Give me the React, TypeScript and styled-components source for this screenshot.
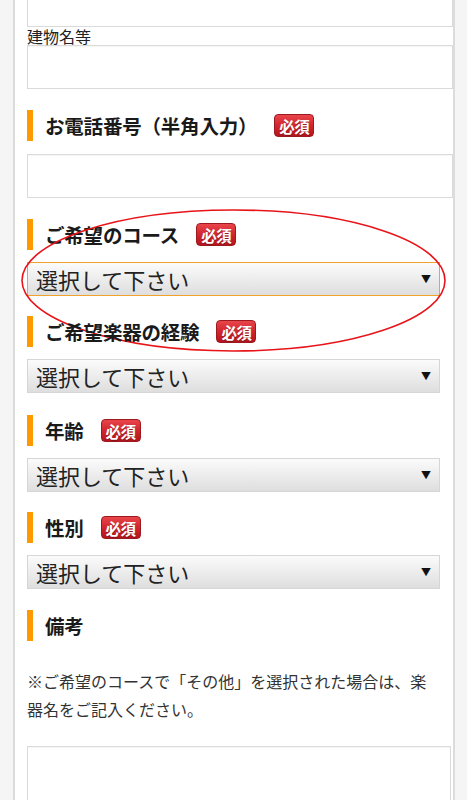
import styled, { createGlobalStyle } from 'styled-components';

const GlobalStyle = createGlobalStyle`
  html, body {
    margin: 0;
    padding: 0;
    background: #f5f5f5;
    font-family: "Noto Sans CJK JP", "Noto Sans", sans-serif;
    color: #222;
  }
  body {
    overflow: hidden;
  }
`;

const Panel = styled.div`
  box-sizing: border-box;
  width: 442px;
  min-height: 830px;
  margin-left: 13px;
  margin-top: -17px;
  padding: 0 0 0 12px;
  background: #fff;
  border-left: 2px solid #dcdcdc;
  border-right: 2px solid #dcdcdc;
`;

const TextInput = styled.div<{ $height?: number; $width?: number; $gap?: number }>`
  box-sizing: border-box;
  width: ${(p) => p.$width ?? 426}px;
  height: ${(p) => p.$height ?? 44}px;
  margin-top: ${(p) => p.$gap ?? 0}px;
  border: 1px solid #dadada;
  box-shadow: inset 0 1px 1px rgba(0, 0, 0, 0.04);
  background: #fff;
`;

const SubLabel = styled.div`
  font-size: 16px;
  line-height: 18px;
  color: #222;
`;

const Field = styled.div<{ $top?: number }>`
  position: relative;
  padding-top: ${(p) => p.$top ?? 21}px;
`;

const Heading = styled.div`
  display: flex;
  align-items: center;
  height: 31px;
  border-left: 6px solid #ff9900;
  padding-left: 12px;
  font-size: 19.5px;
  font-weight: 700;
  color: #1a1a1a;
  letter-spacing: -0.2px;
`;

const Badge = styled.span`
  display: inline-flex;
  align-items: center;
  justify-content: center;
  box-sizing: border-box;
  width: 40px;
  height: 23px;
  margin-left: 17px;
  border: 1px solid #9c1a1f;
  border-radius: 4px;
  background: linear-gradient(#e8454b 0%, #d0262d 50%, #b5141c 100%);
  color: #fff;
  font-size: 15.5px;
  font-weight: 700;
  letter-spacing: -0.5px;
  text-shadow: 0 1px 0 rgba(0, 0, 0, 0.3);
`;

const Select = styled.div<{ $focused?: boolean }>`
  box-sizing: border-box;
  display: flex;
  align-items: center;
  justify-content: space-between;
  width: 413px;
  height: 34px;
  margin-top: 12px;
  padding: 0 8px;
  border: 1px solid ${(p) => (p.$focused ? '#f0a22a' : '#d6d6d6')};
  background: linear-gradient(#fbfbfb, #dedede);
  font-size: 22px;
  color: #222;
`;

const Arrow = styled.span`
  font-size: 10px;
  color: #111;
  line-height: 1;
`;

const Note = styled.p`
  margin: 26px 0 0;
  padding-right: 12px;
  font-size: 16px;
  line-height: 28px;
  color: #333;
`;

const Circle = styled.svg`
  position: absolute;
  left: -6px;
  top: 11px;
  overflow: visible;
  pointer-events: none;
`;

const Required = () => <Badge>必須</Badge>;

const SelectBox = ({ focused }: { focused?: boolean }) => (
  <Select $focused={focused}>
    <span>選択して下さい</span>
    <Arrow>▼</Arrow>
  </Select>
);

export default function App() {
  return (
    <>
      <GlobalStyle />
      <Panel>
        <TextInput />
        <SubLabel>建物名等</SubLabel>
        <TextInput />

        <Field>
          <Heading>
            お電話番号（半角入力）
            <Required />
          </Heading>
          <TextInput $gap={13} />
        </Field>

        <Field>
          <Heading>
            ご希望のコース
            <Required />
          </Heading>
          <SelectBox focused />
          <Circle width="425" height="143" viewBox="0 0 425 143">
            <ellipse cx="212.5" cy="71.5" rx="211.5" ry="70.5" fill="none" stroke="#e8141a" strokeWidth="1.6" />
          </Circle>
        </Field>

        <Field $top={20}>
          <Heading>
            ご希望楽器の経験
            <Required />
          </Heading>
          <SelectBox />
        </Field>

        <Field $top={22}>
          <Heading>
            年齢
            <Required />
          </Heading>
          <SelectBox />
        </Field>

        <Field $top={20}>
          <Heading>
            性別
            <Required />
          </Heading>
          <SelectBox />
        </Field>

        <Field>
          <Heading>備考</Heading>
        </Field>
        <Note>※ご希望のコースで「その他」を選択された場合は、楽器名をご記入ください。</Note>
        <TextInput $width={424} $height={120} $gap={23} />
      </Panel>
    </>
  );
}
